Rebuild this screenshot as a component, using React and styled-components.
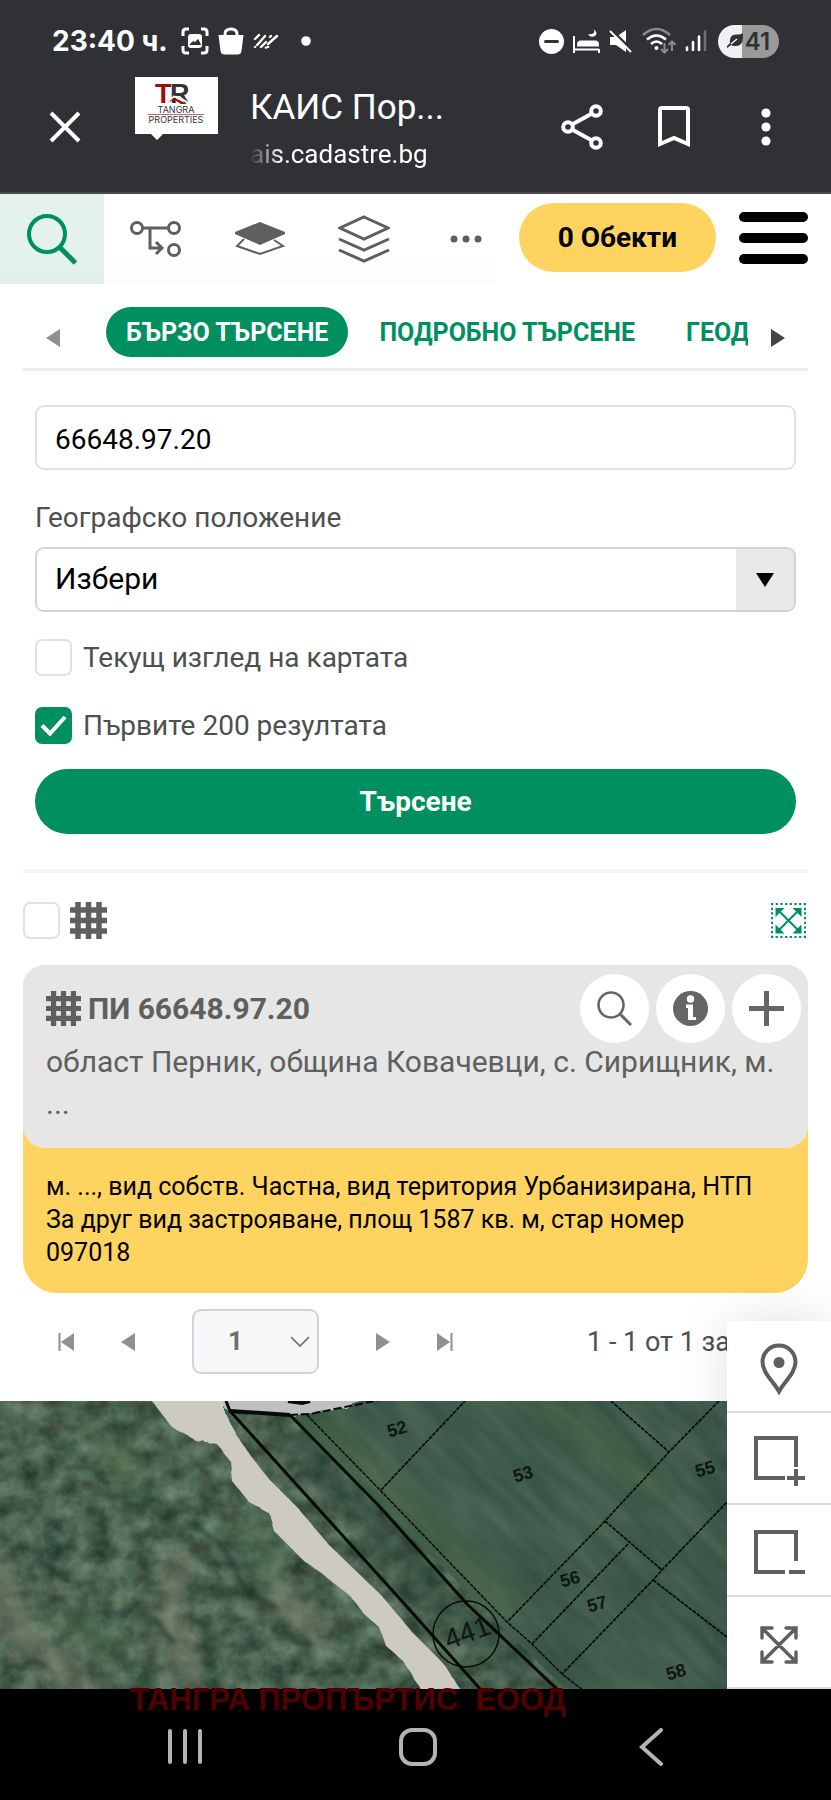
import React, { useState } from "react";
import styled, { createGlobalStyle, ThemeProvider } from "styled-components";

const theme = {
  colors: {
    chrome: "#303135",
    green: "#008f5f",
    mint: "#e3f2ec",
    yellow: "#ffd35f",
    text: "#4c504e",
    icon: "#5e605d",
    line: "#e1e1e1",
    border: "#d0d4da",
    grey: "#e6e6e6",
    arrow: "#909090",
  },
};

const GlobalStyle = createGlobalStyle`
  *, *::before, *::after {
    box-sizing: border-box;
  }
  body {
    margin: 0;
    background: #fff;
    font-family: Roboto, "Noto Sans", sans-serif;
    font-size: 28px;
  }
  button, input, select {
    font: inherit;
    color: inherit;
    margin: 0;
  }
  button {
    padding: 0;
    border: 0;
    background: none;
    cursor: pointer;
  }
  svg {
    display: block;
    flex-shrink: 0;
  }
`;

const Screen = styled.div`
  display: flex;
  flex-direction: column;
  min-height: 100vh;
`;

/* phone and browser chrome */

const Header = styled.header`
  background: ${({ theme }) => theme.colors.chrome};
  border-bottom: 2px solid #4a4a4e;
  color: #fff;
`;

const StatusBar = styled.div`
  display: flex;
  justify-content: space-between;
  height: 60px;
  padding: 22px 52px 0;
`;

const StatusGroup = styled.div`
  display: flex;
  align-items: center;
  gap: 9px;
`;

const Clock = styled.span`
  margin-right: 4px;
  font-family: Inter, Roboto, sans-serif;
  font-size: 28px;
  font-weight: 700;
`;

const Battery = styled.span`
  display: flex;
  align-items: center;
  justify-content: center;
  gap: 2px;
  width: 61px;
  height: 33px;
  border-radius: 17px;
  background: linear-gradient(to right, #f0f0f0 40%, #9a9a9b 40%);
  color: ${({ theme }) => theme.colors.chrome};
  font-family: Inter, Roboto, sans-serif;
  font-size: 24px;
  font-weight: 600;
`;

const AppBar = styled.div`
  display: flex;
  align-items: center;
  height: 132px;
  padding: 2px 41px 0;
`;

const ChromeButton = styled.button`
  display: grid;
  place-items: center;
  width: 48px;
  height: 48px;
`;

const ChromeActions = styled.div`
  display: flex;
  gap: 44px;
`;

const Logo = styled.div`
  align-self: flex-start;
  margin: 15px 32px 0 46px;
`;

const PageInfo = styled.div`
  flex: 1;
  min-width: 0;
  padding-top: 6px;
`;

const PageTitle = styled.div`
  font-size: 35px;
  line-height: 48px;
  white-space: nowrap;
`;

const PageUrl = styled.div`
  font-size: 26px;
  line-height: 44px;
  mask-image: linear-gradient(to right, transparent, #000 32px);
`;

/* page toolbar */

const Main = styled.main`
  position: relative;
  display: flex;
  flex: 1;
  flex-direction: column;
`;

const Toolbar = styled.nav`
  display: flex;
  align-items: center;
  height: 90px;
  padding-right: 23px;
`;

const ToolTab = styled.button`
  display: grid;
  place-items: center;
  width: ${({ $narrow }) => ($narrow ? "80px" : "104px")};
  height: 100%;
  padding-left: ${({ $narrow }) => ($narrow ? "20px" : "0")};
  background: ${({ $active, theme }) =>
    $active
      ? `linear-gradient(${theme.colors.mint} 70%, #e0efe9)`
      : "linear-gradient(#fff 70%, #fbfbfb)"};
  color: ${({ $active, theme }) =>
    $active ? theme.colors.green : theme.colors.icon};
`;

const ToolbarActions = styled.div`
  display: flex;
  align-items: center;
  gap: 23px;
  margin-left: auto;
  padding-bottom: 3px;
`;

const ObjectsButton = styled.button`
  height: 69px;
  padding: 0 39px;
  border-radius: 35px;
  background: ${({ theme }) => theme.colors.yellow};
  color: #000;
  font-weight: 700;
`;

const MenuButton = styled.button`
  display: flex;
  flex-direction: column;
  gap: 11px;
  width: 69px;
`;

const MenuBar = styled.span`
  height: 10px;
  border-radius: 5px;
  background: #000;
`;

/* search panel */

const Panel = styled.div`
  padding: 0 23px;
`;

const TabStrip = styled.div`
  display: flex;
  height: 87px;
  border-bottom: 3px solid #ececec;
`;

const StripArrow = styled.button`
  display: grid;
  place-items: center;
  width: 60px;
  padding-top: 24px;
  color: ${({ disabled, theme }) => (disabled ? theme.colors.arrow : "#444")};
`;

const TabList = styled.div`
  display: flex;
  flex: 1;
  align-items: flex-start;
  gap: 11px;
  min-width: 0;
  padding: 23px 0 0 23px;
  overflow: hidden;
`;

const Tab = styled.button`
  flex-shrink: 0;
  height: 50px;
  padding: 0 20px;
  border-radius: 25px;
  background: ${({ $active, theme }) =>
    $active ? theme.colors.green : "none"};
  color: ${({ $active, theme }) => ($active ? "#fff" : theme.colors.green)};
  font-size: 25px;
  font-weight: 700;
  white-space: nowrap;
`;

const Form = styled.form`
  display: flex;
  flex-direction: column;
  padding: 34px 12px 35px;
  border-bottom: 4px solid #f4f4f4;
  color: ${({ theme }) => theme.colors.text};
`;

const TextInput = styled.input`
  height: 65px;
  padding: 4px 18px 0;
  border: 2px solid ${({ theme }) => theme.colors.line};
  border-radius: 9px;
  background: #fff;
  color: #000;
`;

const FieldLabel = styled.label`
  margin: 32px 0 13px;
  line-height: 32px;
`;

const SelectBox = styled.div`
  display: flex;
  height: 65px;
  border: 2px solid ${({ theme }) => theme.colors.border};
  border-radius: 9px;
  overflow: hidden;

  select {
    flex: 1;
    min-width: 0;
    padding: 0 18px 2px;
    border: 0;
    appearance: none;
    background: #fff;
    color: #000;
    font-size: 30px;
  }
`;

const SelectArrow = styled.span`
  display: grid;
  place-items: center;
  width: 58px;
  background: #e9e9e9;
`;

const CheckRow = styled.label`
  display: flex;
  align-items: center;
  gap: 11px;
  margin-top: ${({ $first }) => ($first ? "27px" : "31px")};
`;

const Checkbox = styled.input`
  flex-shrink: 0;
  width: 37px;
  height: 37px;
  border: 2px solid ${({ theme }) => theme.colors.line};
  border-radius: 7px;
  appearance: none;
  background: #fff center / 37px no-repeat;

  &:checked {
    border-color: ${({ theme }) => theme.colors.green};
    background-color: ${({ theme }) => theme.colors.green};
    background-image: url("data:image/svg+xml,%3Csvg xmlns='http://www.w3.org/2000/svg' viewBox='0 0 37 37'%3E%3Cpath d='M7 18.500l8 8L30 10' fill='none' stroke='%23fff' stroke-width='4'/%3E%3C/svg%3E");
  }
`;

const SearchButton = styled.button`
  height: 65px;
  margin-top: 25px;
  border-radius: 33px;
  background: ${({ theme }) => theme.colors.green};
  color: #fff;
  font-weight: 700;
`;

/* results */

const ResultsBar = styled.div`
  display: flex;
  align-items: center;
  gap: 10px;
  padding: 29px 2px 26px 0;
  color: ${({ theme }) => theme.colors.icon};
`;

const ZoomAll = styled.button`
  margin-left: auto;
  color: ${({ theme }) => theme.colors.green};
`;

const Card = styled.article`
  border-radius: 22px 22px 34px 34px;
  background: ${({ theme }) => theme.colors.yellow};
`;

const CardHead = styled.div`
  padding: 10px 7px 23px 23px;
  border-radius: 22px;
  background: ${({ theme }) => theme.colors.grey};
  color: ${({ theme }) => theme.colors.icon};
`;

const CardTitleRow = styled.div`
  display: flex;
  align-items: center;
  gap: 7px;
  height: 66px;
`;

const CardTitle = styled.h2`
  flex: 1;
  margin: 0;
  font-size: 30px;
  font-weight: 700;
`;

const RoundButton = styled.button`
  display: grid;
  place-items: center;
  width: 69px;
  height: 69px;
  border-radius: 50%;
  background: #fff;
  color: #666;
`;

const Address = styled.p`
  margin: 0;
  padding-right: 24px;
  font-size: 30px;
  line-height: 42px;
`;

const CardDetails = styled.p`
  margin: 0;
  padding: 22px 40px 24px 23px;
  color: #000;
  font-size: 25px;
  line-height: 33px;
`;

const Pager = styled.div`
  display: flex;
  align-items: center;
  padding: 16px 78px 27px 12px;
  color: ${({ theme }) => theme.colors.text};
`;

const PagerButton = styled.button`
  display: grid;
  place-items: center;
  width: 62px;
  height: 48px;
  color: ${({ theme }) => theme.colors.arrow};
`;

const PageSelect = styled.div`
  display: grid;
  align-items: center;
  width: 127px;
  height: 65px;
  margin: 0 33px;

  > * {
    grid-area: 1 / 1;
  }
  select {
    width: 100%;
    height: 100%;
    padding: 0 34px 2px;
    border: 2px solid ${({ theme }) => theme.colors.border};
    border-radius: 9px;
    appearance: none;
    background: #f7f7f7;
    color: #6e6e70;
    font-size: 26px;
    font-weight: 700;
  }
  svg {
    justify-self: end;
    margin-right: 9px;
    pointer-events: none;
  }
`;

const PagerInfo = styled.span`
  margin-left: auto;
  font-size: 27px;
  white-space: nowrap;
`;

/* map */

const Map = styled.section`
  display: flex;
  flex: 1;
  min-height: 240px;
  background: #43604e;

  svg {
    flex: 1;
    width: 100%;
  }
`;

const MapTools = styled.div`
  position: absolute;
  right: 0;
  bottom: 0;
  width: 104px;
  background: #fff;
  box-shadow: 0 0 52px rgba(0, 0, 0, 0.12);
`;

const MapTool = styled.button`
  display: grid;
  place-items: center;
  width: 100%;
  height: 92px;
  padding-top: 5px;
  border-bottom: 2px solid #dcdcdc;
  color: ${({ theme }) => theme.colors.icon};
`;

const PhoneNav = styled.footer`
  position: relative;
  display: flex;
  align-items: center;
  justify-content: center;
  gap: 173px;
  height: 111px;
  padding: 4px 0 0 4px;
  background: #000;
  color: #b4b4b4;
`;

const NavButton = styled.button`
  display: grid;
  place-items: center;
  width: 60px;
  height: 60px;
`;

const Owner = styled.span`
  position: absolute;
  top: -7px;
  left: 130px;
  color: #500000;
  font-family: "Liberation Sans", sans-serif;
  font-size: 31px;
  font-weight: 700;
  line-height: 36px;
  white-space: pre;
`;

const Svg = ({ w, h, children, ...rest }) => (
  <svg
    width={w}
    height={h}
    viewBox={`0 0 ${w} ${h}`}
    fill="none"
    stroke="currentColor"
    aria-hidden="true"
    {...rest}
  >
    {children}
  </svg>
);

const Triangle = ({ left, bar }) => (
  <Svg w={18} h={20} fill="currentColor" stroke="none">
    <g transform={left ? "matrix(-1 0 0 1 18 0)" : undefined}>
      <path d={bar ? "M1 1l13 9-13 9z" : "M2 1l14 9-14 9z"} />
      {bar && <path d="M14.500 1h2v18h-2z" />}
    </g>
  </Svg>
);

const GridIcon = ({ size }) => (
  <svg
    width={size}
    height={size}
    viewBox="0 0 37 37"
    stroke="currentColor"
    strokeWidth="5.500"
    aria-hidden="true"
  >
    <path d="M8 0v37M18.500 0v37M29 0v37M0 8h37M0 18.500h37M0 29h37" />
  </svg>
);

const StatusLeft = () => (
  <StatusGroup>
    <Clock>23:40 ч.</Clock>
    <Svg w={28} h={28} strokeWidth={3}>
      <path d="M2 9V5q0-3 3-3h3M20 2h3q3 0 3 3v4M26 19v4q0 3-3 3h-3M8 26H5q-3 0-3-3v-4" />
      <rect x="7" y="7" width="14" height="14" rx="3" fill="#fff" stroke="none" />
      <path
        d="M9 17.500l3-3 2 1 3-3 2.500 5z"
        fill="#303135"
        stroke="#303135"
        strokeWidth="1"
      />
    </Svg>
    <Svg w={26} h={28}>
      <path d="M0.500 8h25l-2 16q-.5 3.500-4 3.500h-13q-3.500 0-4-3.500z" fill="#fff" stroke="none" />
      <path d="M7 9V7q0-5 6-5t6 5v2" strokeWidth="3" />
    </Svg>
    <Svg w={26} h={16} strokeWidth={2.4} strokeLinecap="round">
      <path d="M2 6l4-4M2 14l.1-.1M6 10l6-7M8 14l5-5M17 4l1-1M13 14.500l-.1.1M15 11l9-8M15 14l.1-.1M5 11l-1 1" />
    </Svg>
    <Svg w={34} h={12} fill="#fff" stroke="none">
      <circle cx="18" cy="6" r="4.800" />
    </Svg>
  </StatusGroup>
);

const StatusRight = () => (
  <StatusGroup>
    <Svg w={25} h={25} fill="#fff" stroke="none">
      <circle cx="12.500" cy="12.500" r="12.500" />
      <path d="M6.500 12.500h12" stroke="#303135" strokeWidth="3" strokeLinecap="round" />
    </Svg>
    <Svg w={27} h={25} strokeWidth={2}>
      <path d="M1 7v17M1 20.500h25M26 24v-4" />
      <path d="M4 17.500v-2q0-4 4-4h14q4 0 4 4v2z" fill="#fff" stroke="none" />
      <path d="M20.500 0q3.500 5-5.500 5.500 3 3.500 7 1.500 3.500-3-1.500-7z" fill="#fff" stroke="none" />
    </Svg>
    <Svg w={24} h={24} strokeWidth={3}>
      <path d="M1 8h6l10-7v22L7 16H1z" fill="#fff" stroke="none" />
      <path d="M2 .500l22 22" stroke="#303135" strokeWidth="3" />
      <path d="M1 2l21 21" strokeWidth="2" />
    </Svg>
    <Svg w={34} h={28} strokeWidth={2.5}>
      <path d="M1 8q13.500-12 27 0" stroke="#8b8b8d" />
      <path d="M5 12.500q9.500-8 19 0M9 17q5.500-5 11 0" />
      <circle cx="14.500" cy="21" r="2" fill="#fff" stroke="none" />
      <path d="M22.500 16v9M19 22l3.500 3.500L26 22M30 24v-9M26.500 18l3.500-3.500 3.500 3.500" stroke="#8b8b8d" strokeWidth="2" />
    </Svg>
    <Svg w={24} h={24} strokeWidth={2.6} strokeLinecap="round">
      <path d="M2 18.500V21M8 13v8M14 7.500V21" />
      <path d="M20 2.500V21" stroke="#727275" />
    </Svg>
    <Battery>
      <Svg w={16} h={16} fill="#303135" stroke="none">
        <path d="M16 0q1 14-8 13-3 0-4-1L0 15v-2l3-3Q2 2 9 1.500 14 1.500 16 0z" />
        <path d="M4 11l6-5" stroke="#f0f0f0" strokeWidth="1.500" />
      </Svg>
      41
    </Battery>
  </StatusGroup>
);

const LogoMark = () => (
  <svg width="83" height="63" viewBox="0 0 83 63" role="img" aria-label="Tangra Properties">
    <path d="M0 0h83v57H28l-6 6-6-6H0z" fill="#fff" />
    <g fontFamily="Liberation Sans, sans-serif" fill="#333">
      <text x="35" y="26" fontSize="27" fontWeight="700">R</text>
      <text x="20" y="26" fontSize="27" fontWeight="700" fill="#a30b0b">T</text>
      <path d="M32 26l7-6.500 6 1.500 10 6" fill="none" stroke="#fff" strokeWidth="2" />
      <path d="M33 25.500l6-5 13 6.500h-6l-7-4.500z" fill="#a30b0b" />
      <text x="41" y="36" fontSize="9" textAnchor="middle" fontFamily="Inter, sans-serif">TANGRA</text>
      <text x="41" y="46" fontSize="9" textAnchor="middle" fontFamily="Inter, sans-serif">PROPERTIES</text>
    </g>
    <path d="M13 37.500h56" stroke="#c26a6a" />
  </svg>
);

const toolIcons = {
  search: (
    <Svg w={52} h={52} strokeWidth={4}>
      <circle cx="21" cy="21" r="18" />
      <path d="M33.500 34l16 16" strokeWidth="5" />
    </Svg>
  ),
  route: (
    <Svg w={52} h={38} strokeWidth={3}>
      <circle cx="7" cy="8" r="5.500" />
      <circle cx="44" cy="8" r="5.500" />
      <circle cx="44" cy="30" r="5.500" />
      <path d="M13 8h25M20 8v20h12M26 22l6 6-6 6" />
    </Svg>
  ),
  base: (
    <Svg w={52} h={36} strokeWidth={2}>
      <path d="M10 18L3 25l23 8 23-8-9-6" />
      <path d="M26 1l25 10v2L26 24 1 13v-2z" fill="currentColor" stroke="none" />
    </Svg>
  ),
  layers: (
    <Svg w={52} h={48} strokeWidth={3}>
      <path d="M26 2l24 11-24 11L2 13zM1 24l25 11 25-11M1 35l25 11 25-11" />
    </Svg>
  ),
  more: (
    <Svg w={32} h={8} fill="currentColor" stroke="none">
      <circle cx="4" cy="4" r="3.500" />
      <circle cx="16" cy="4" r="3.500" />
      <circle cx="28" cy="4" r="3.500" />
    </Svg>
  ),
};

const tools = [
  { id: "search", label: "Търсене" },
  { id: "route", label: "Маршрут" },
  { id: "base", label: "Основа" },
  { id: "layers", label: "Слоеве" },
  { id: "more", label: "Още", narrow: true },
];

const mapTools = [
  {
    label: "Местоположение",
    icon: (
      <Svg w={38} h={52} strokeWidth={4}>
        <path d="M19 48.500C14 39 2.500 30 2.500 19a16.500 16.500 0 0 1 33 0C35.500 30 24 39 19 48.500z" />
        <circle cx="19" cy="19.500" r="5.500" fill="currentColor" stroke="none" />
      </Svg>
    ),
  },
  {
    label: "Приближи",
    icon: (
      <Svg w={52} h={52} strokeWidth={4}>
        <path d="M32 43H3V3h40v29M43 34v17M34 43h18" />
      </Svg>
    ),
  },
  {
    label: "Отдалечи",
    icon: (
      <Svg w={52} h={52} strokeWidth={4}>
        <path d="M32 45H3V5h40v29M36 45h16" />
      </Svg>
    ),
  },
  {
    label: "Цял екран",
    icon: (
      <Svg w={38} h={38} strokeWidth={3.4} strokeLinecap="round">
        <path d="M2 2l34 34M36 2L2 36M2 12V2h10M26 2h10v10M36 26v10H26M12 36H2V26" />
      </Svg>
    ),
  },
];

const parcels = [
  ["52", 397, 28],
  ["53", 523, 73],
  ["55", 705, 68],
  ["56", 570, 178],
  ["57", 597, 203],
  ["58", 676, 271],
];

const CadastreMap = () => (
  <svg viewBox="0 0 831 288" preserveAspectRatio="xMinYMin slice" role="img" aria-label="Карта">
    <defs>
      <filter id="trees" x="0" y="0" width="100%" height="100%" colorInterpolationFilters="sRGB">
        <feTurbulence type="fractalNoise" baseFrequency="0.045 0.05" numOctaves="5" seed="8" />
        <feColorMatrix values=".36 .08 0 0 .07  .4 0 0 0 .18  .34 0 .04 0 .12  0 0 0 0 1" />
      </filter>
      <filter id="grass" x="0" y="0" width="100%" height="100%" colorInterpolationFilters="sRGB">
        <feTurbulence type="fractalNoise" baseFrequency="0.012 0.06" numOctaves="4" seed="3" />
        <feColorMatrix values=".13 .03 0 0 .17  .12 0 0 0 .3  .1 0 0 0 .25  0 0 0 0 1" />
      </filter>
      <filter id="rough">
        <feTurbulence type="fractalNoise" baseFrequency="0.08" numOctaves="2" />
        <feDisplacementMap in="SourceGraphic" scale="7" />
        <feGaussianBlur stdDeviation="0.7" />
      </filter>
      <filter id="haze">
        <feGaussianBlur stdDeviation="9" />
      </filter>
      <filter id="shade">
        <feTurbulence type="fractalNoise" baseFrequency="0.06" numOctaves="3" />
        <feDisplacementMap in="SourceGraphic" scale="22" />
        <feGaussianBlur stdDeviation="2" />
      </filter>
      <clipPath id="field">
        <path d="M290 14L375 0h456v288H565z" />
      </clipPath>
    </defs>
    <rect width="831" height="288" filter="url(#trees)" />
    <g filter="url(#haze)" fill="none">
      <path d="M0 160q0 70 90 128M180 150l-10 70 20 60M270 180l50 60M0 220l60 50" stroke="#8a8672" strokeWidth="24" opacity=".45" />
      <path d="M100 30l40 60M240 120l40 50M60 210l60 50" stroke="#4f7449" strokeWidth="30" opacity=".4" />
      <path d="M290 30l110 125 130 130" stroke="#263e38" strokeWidth="34" opacity=".45" />
    </g>
    <g filter="url(#shade)" fill="none" stroke="#22362e" strokeWidth="6" opacity=".6">
      <path d="M125 112q12-18 40-8M192 122l30 22 24 44 30 20M36 156l32 24M152 215l20 26M190 220h20M270 226l44 20M5 270l30-12 14 10M205 245h30" />
    </g>
    <g clipPath="url(#field)">
      <rect x="-300" y="-600" width="1400" height="1400" filter="url(#grass)" transform="rotate(44 500 140)" />
      <g filter="url(#haze)" fill="none" stroke="#56733f" opacity=".35">
        <path d="M320 20l150 150 40 40M540 0l120 90" strokeWidth="24" />
      </g>
    </g>
    <g filter="url(#rough)">
      <path
        d="M148-5L171 25l24 14 22 4 14 18 2 20 16 20 20 11 5 18 30 30 21 15 24 19 16 20 14 12 6 18 18 16 22 34h40l-24-34-28-28-32-38-52-50-32-38-30-30-27-36L225 12V-5z"
        fill="#cccac3"
      />
      <path d="M222-5l4 14 64 6 45-6 45-14z" fill="#bfc1bd" />
    </g>
    <g fill="none" stroke="#060b08">
      <path d="M226 0l4 10 170 188 82 92M290 14l90 92 87 97 92 87" strokeWidth="3" />
      <path d="M230 10l60 4M288 0l14 2 8-2" strokeWidth="4" />
      <path d="M290 14l20-1 70-14" strokeWidth="2" strokeDasharray="8 3" />
      <path d="M307 14l73 75 127 132 25 22 30 30 22 17" strokeWidth="1.500" strokeDasharray="4 1" />
      <path
        d="M381 89l84-89M611 0l58 51M719 0l-50 51-64 69-98 101M605 120l57 49M628 143l-96 100M831-6L727 101l-65 68-9 10-91 94M653 179l74 57 60 52"
        strokeWidth="1.700"
        strokeDasharray="4 1"
      />
      <circle cx="466" cy="233" r="33" strokeWidth="1.500" />
    </g>
    <g fill="#0e1712" fontFamily="Liberation Sans, sans-serif" textAnchor="middle">
      {parcels.map(([name, x, y]) => (
        <text key={name} fontSize="18" fontWeight="700" transform={`translate(${x} ${y}) rotate(-15)`} y="6">
          {name}
        </text>
      ))}
      <text fontSize="28" transform="translate(467 231) rotate(-20)" y="10">
        441
      </text>
    </g>
  </svg>
);

const App = () => {
  const [query, setQuery] = useState("66648.97.20");

  return (
    <ThemeProvider theme={theme}>
      <GlobalStyle />
      <Screen>
        <Header>
          <StatusBar>
            <StatusLeft />
            <StatusRight />
          </StatusBar>
          <AppBar>
            <ChromeButton aria-label="Затвори">
              <Svg w={32} h={32} strokeWidth={4}>
                <path d="M2 2l28 28M30 2L2 30" />
              </Svg>
            </ChromeButton>
            <Logo>
              <LogoMark />
            </Logo>
            <PageInfo>
              <PageTitle>КАИС Пор...</PageTitle>
              <PageUrl>ais.cadastre.bg</PageUrl>
            </PageInfo>
            <ChromeActions>
              <ChromeButton aria-label="Сподели">
                <Svg w={42} h={46} strokeWidth={4}>
                  <circle cx="7" cy="23" r="4.800" />
                  <circle cx="35" cy="7" r="4.800" />
                  <circle cx="35" cy="39" r="4.800" />
                  <path d="M11 20.500L31 9.500M11 25.500l20 11" />
                </Svg>
              </ChromeButton>
              <ChromeButton aria-label="Отметка">
                <Svg w={32} h={42} strokeWidth={4}>
                  <path d="M2 38V4q0-2 2-2h24q2 0 2 2v34l-14-6z" />
                </Svg>
              </ChromeButton>
              <ChromeButton aria-label="Меню">
                <Svg w={10} h={38} fill="#fff" stroke="none">
                  <circle cx="5" cy="5" r="4.600" />
                  <circle cx="5" cy="19" r="4.600" />
                  <circle cx="5" cy="33" r="4.600" />
                </Svg>
              </ChromeButton>
            </ChromeActions>
          </AppBar>
        </Header>

        <Main>
          <Toolbar>
            {tools.map((tool, i) => (
              <ToolTab
                key={tool.id}
                aria-label={tool.label}
                $active={i === 0}
                $narrow={tool.narrow}
              >
                {toolIcons[tool.id]}
              </ToolTab>
            ))}
            <ToolbarActions>
              <ObjectsButton>0 Обекти</ObjectsButton>
              <MenuButton aria-label="Меню">
                <MenuBar />
                <MenuBar />
                <MenuBar />
              </MenuButton>
            </ToolbarActions>
          </Toolbar>

          <Panel>
            <TabStrip>
              <StripArrow disabled aria-label="Назад">
                <Triangle left />
              </StripArrow>
              <TabList>
                <Tab $active>БЪРЗО ТЪРСЕНЕ</Tab>
                <Tab>ПОДРОБНО ТЪРСЕНЕ</Tab>
                <Tab>ГЕОД</Tab>
              </TabList>
              <StripArrow aria-label="Напред">
                <Triangle />
              </StripArrow>
            </TabStrip>

            <Form onSubmit={(e) => e.preventDefault()}>
              <TextInput
                aria-label="Търсене"
                value={query}
                onChange={(e) => setQuery(e.target.value)}
              />
              <FieldLabel htmlFor="location">Географско положение</FieldLabel>
              <SelectBox>
                <select id="location">
                  <option>Избери</option>
                </select>
                <SelectArrow>
                  <Svg w={18} h={14} fill="#000" stroke="none">
                    <path d="M0 0h18L9 14z" />
                  </Svg>
                </SelectArrow>
              </SelectBox>
              <CheckRow $first>
                <Checkbox type="checkbox" />
                Текущ изглед на картата
              </CheckRow>
              <CheckRow>
                <Checkbox type="checkbox" defaultChecked />
                Първите 200 резултата
              </CheckRow>
              <SearchButton>Търсене</SearchButton>
            </Form>

            <ResultsBar>
              <Checkbox type="checkbox" aria-label="Избери всички" />
              <GridIcon size={37} />
              <ZoomAll aria-label="Покажи всички">
                <Svg w={35} h={35} strokeWidth={2}>
                  <path d="M0 1h35M0 34h35M1 0v35M34 0v35" strokeDasharray="2.200 2.480" />
                  <path d="M8 8l19 19M27 8L8 27" />
                  <path
                    d="M4.500 5h9l-9 9zM30.500 5h-9l9 9zM4.500 30.500h9l-9-9zM30.500 30.500h-9l9-9z"
                    fill="currentColor"
                    stroke="none"
                  />
                </Svg>
              </ZoomAll>
            </ResultsBar>

            <Card>
              <CardHead>
                <CardTitleRow>
                  <GridIcon size={35} />
                  <CardTitle>ПИ 66648.97.20</CardTitle>
                  <RoundButton aria-label="Покажи">
                    <Svg w={35} h={35} strokeWidth={2.6}>
                      <circle cx="14" cy="14" r="12.500" />
                      <path d="M23 23l11 11" strokeWidth="3" />
                    </Svg>
                  </RoundButton>
                  <RoundButton aria-label="Информация">
                    <Svg w={35} h={35} fill="currentColor" stroke="none">
                      <circle cx="17.500" cy="17.500" r="17.500" />
                      <circle cx="17.500" cy="8" r="3.700" fill="#fff" />
                      <path d="M13 13.500h7V26h3v3h-8V17h-2z" fill="#fff" />
                    </Svg>
                  </RoundButton>
                  <RoundButton aria-label="Добави">
                    <Svg w={35} h={35} strokeWidth={5}>
                      <path d="M17.500 0v35M0 17.500h35" />
                    </Svg>
                  </RoundButton>
                </CardTitleRow>
                <Address>
                  област Перник, община Ковачевци, с. Сирищник, м. ...
                </Address>
              </CardHead>
              <CardDetails>
                м. ..., вид собств. Частна, вид територия Урбанизирана, НТП За
                друг вид застрояване, площ 1587 кв. м, стар номер 097018
              </CardDetails>
            </Card>

            <Pager>
              <PagerButton aria-label="Първа страница">
                <Triangle left bar />
              </PagerButton>
              <PagerButton aria-label="Предишна страница">
                <Triangle left />
              </PagerButton>
              <PageSelect>
                <select aria-label="Страница">
                  <option>1</option>
                </select>
                <Svg w={20} h={12} stroke="#6e6e70" strokeWidth={1.6}>
                  <path d="M1 1l9 9 9-9" />
                </Svg>
              </PageSelect>
              <PagerButton aria-label="Следваща страница">
                <Triangle />
              </PagerButton>
              <PagerButton aria-label="Последна страница">
                <Triangle bar />
              </PagerButton>
              <PagerInfo>1 - 1 от 1 за</PagerInfo>
            </Pager>
          </Panel>

          <Map>
            <CadastreMap />
          </Map>

          <MapTools>
            {mapTools.map((tool) => (
              <MapTool key={tool.label} aria-label={tool.label}>
                {tool.icon}
              </MapTool>
            ))}
          </MapTools>
        </Main>

        <PhoneNav>
          <Owner>{"ТАНГРА ПРОПЪРТИС  ЕООД"}</Owner>
          <NavButton aria-label="Последни">
            <Svg w={34} h={35} strokeWidth={4} strokeLinecap="round">
              <path d="M2 2v31M17 2v31M32 2v31" />
            </Svg>
          </NavButton>
          <NavButton aria-label="Начало">
            <Svg w={38} h={38} strokeWidth={4}>
              <rect x="2" y="2" width="34" height="34" rx="11" />
            </Svg>
          </NavButton>
          <NavButton aria-label="Назад">
            <Svg w={24} h={38} strokeWidth={4} strokeLinecap="round">
              <path d="M22 2L3 19l19 17" />
            </Svg>
          </NavButton>
        </PhoneNav>
      </Screen>
    </ThemeProvider>
  );
};

export default App;
